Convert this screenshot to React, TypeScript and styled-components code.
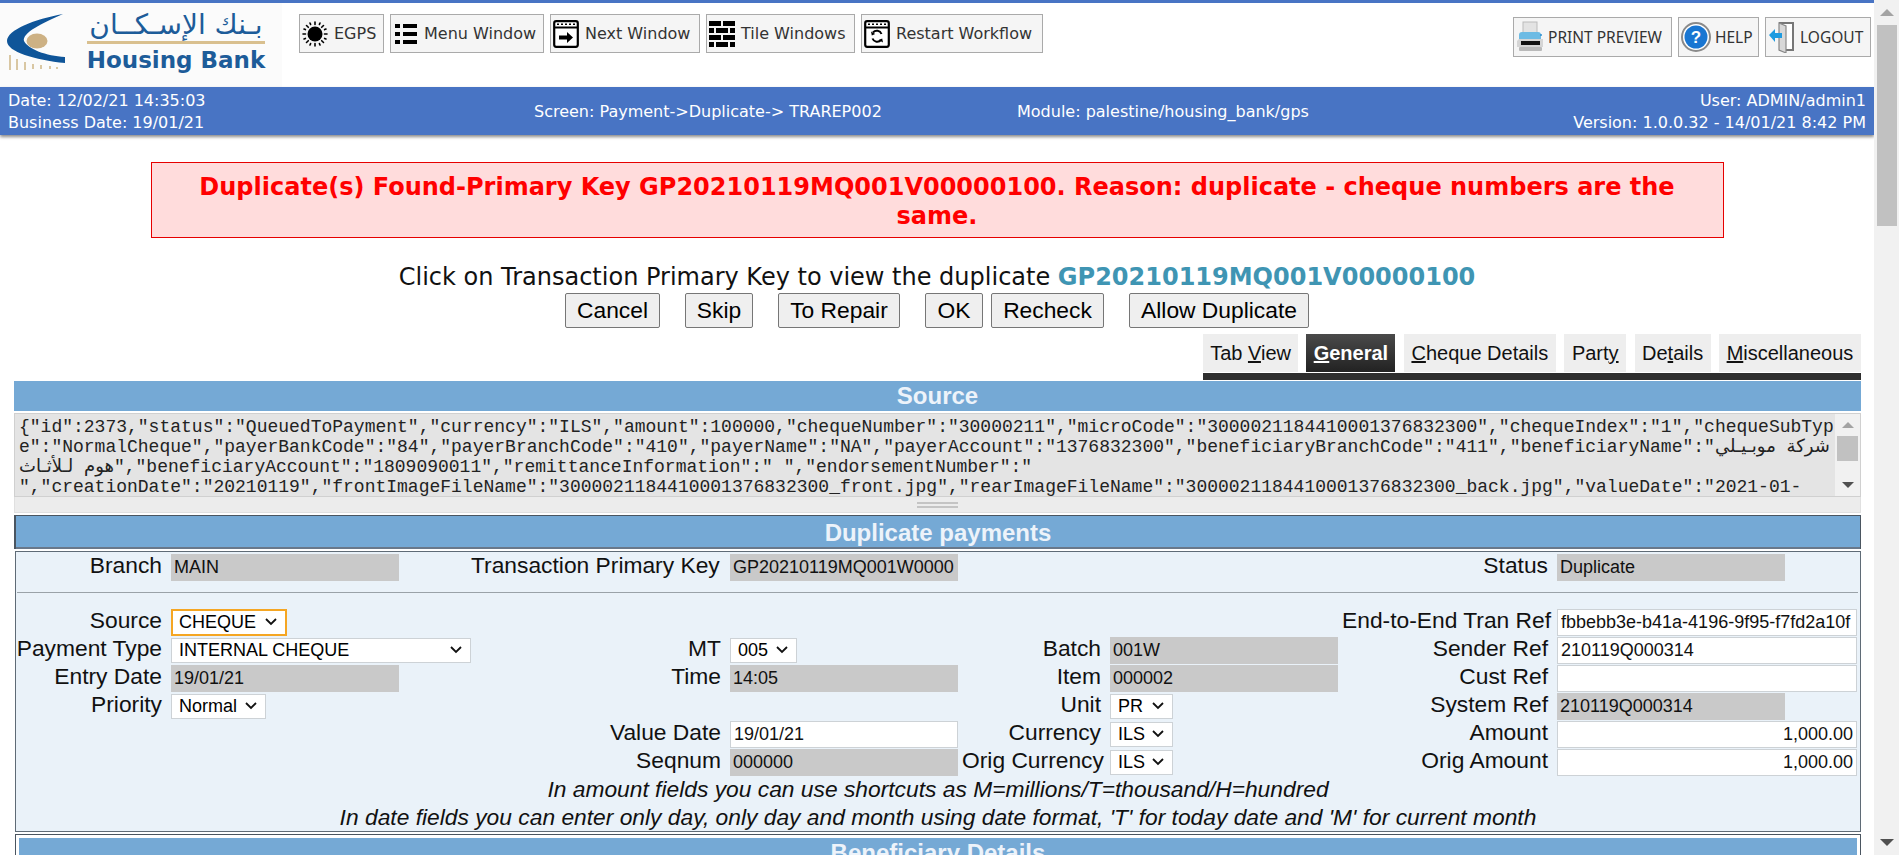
import React from "react";
import styled, { createGlobalStyle } from "styled-components";

const Global = createGlobalStyle`
  html, body { margin: 0; padding: 0; height: 855px; overflow: hidden; background: #fff; }
  * { box-sizing: border-box; }
`;

const WIDE = `"DejaVu Sans", Verdana, sans-serif`;
const HEAD = `"Noto Sans", Tahoma, sans-serif`;
const BODY = `"Liberation Sans", Arial, sans-serif`;
const CHEVRON =
  "data:image/svg+xml;utf8,<svg xmlns='http://www.w3.org/2000/svg' width='12' height='8' viewBox='0 0 12 8'><path d='M1 1l5 5 5-5' fill='none' stroke='%23111' stroke-width='1.8'/></svg>";

const Page = styled.div`
  display: flex;
  width: 1899px;
  height: 855px;
  overflow: hidden;
  font-family: ${BODY};
`;
const Main = styled.div`
  width: 1874px;
  height: 855px;
  overflow: hidden;
  flex: none;
`;

const ScrollTrack = styled.div<{ $w: number }>`
  width: ${(p) => p.$w}px;
  flex: none;
  background: #f1f1f1;
  display: flex;
  flex-direction: column;
  align-items: center;
`;
const ArrowUp = styled.div<{ $s: number; $m: number }>`
  flex: none;
  width: 0;
  height: 0;
  margin: ${(p) => p.$m}px 0;
  border-left: ${(p) => p.$s}px solid transparent;
  border-right: ${(p) => p.$s}px solid transparent;
  border-bottom: ${(p) => p.$s}px solid #a3a3a3;
`;
const ArrowDown = styled.div<{ $s: number; $m: number }>`
  flex: none;
  width: 0;
  height: 0;
  margin: auto 0 ${(p) => p.$m}px;
  border-left: ${(p) => p.$s}px solid transparent;
  border-right: ${(p) => p.$s}px solid transparent;
  border-top: ${(p) => p.$s}px solid #505050;
`;
const Thumb = styled.div<{ $h: number; $w: number }>`
  flex: none;
  width: ${(p) => p.$w}px;
  height: ${(p) => p.$h}px;
  background: #c1c1c1;
`;

const Header = styled.header`
  height: 87px;
  border-top: 3px solid #4874c4;
  display: flex;
  align-items: flex-start;
  background: #fff;
`;
const Logo = styled.div`
  width: 282px;
  height: 84px;
  flex: none;
  background: #fbfbfb;
  display: flex;
  padding: 10px 0 0 6px;
`;
const LogoText = styled.div`
  margin: -3px 0 0 17px;
  width: 182px;
  display: flex;
  flex-direction: column;
  align-items: center;
`;
const LogoArabic = styled.div`
  font-family: "DejaVu Sans", sans-serif;
  font-size: 28px;
  line-height: 30px;
  height: 30px;
  color: #1d5c99;
  white-space: nowrap;
`;
const LogoRule = styled.div`
  width: 178px;
  height: 3px;
  background: #d9c08f;
  margin-top: 1px;
`;
const LogoName = styled.div`
  font-family: ${WIDE};
  font-weight: 700;
  font-size: 23px;
  line-height: 26px;
  margin-top: 3px;
  color: #1d5c99;
  white-space: nowrap;
`;

const ToolGroup = styled.div<{ $top: number; $left: number; $right: number }>`
  display: flex;
  gap: 6px;
  margin: ${(p) => p.$top}px ${(p) => p.$right}px 0 ${(p) => p.$left}px;
`;
const Spacer = styled.div`
  flex: 1;
`;
const ToolButton = styled.button<{ $w: number }>`
  height: 39px;
  width: ${(p) => p.$w}px;
  display: flex;
  align-items: center;
  justify-content: flex-start;
  gap: 6px;
  padding: 0 0 0 2px;
  background: #f5f5f5;
  border: 1px solid #aaaaaa;
  color: #333;
  font-family: ${WIDE};
  font-size: 16px;
  white-space: nowrap;
`;
const SideButton = styled(ToolButton)`
  height: 40px;
  gap: 4px;
  font-family: ${HEAD};
  font-size: 15.5px;
`;

const Banner = styled.div`
  height: 48px;
  background: #4874c4;
  color: #fff;
  font-family: ${WIDE};
  font-size: 16px;
  line-height: 22px;
  display: grid;
  grid-template-columns: 526px 483px 1fr auto;
  align-items: center;
  padding: 2px 8px 0 8px;
  box-shadow: 0 2px 3px #8a8a8a;
  position: relative;
`;
const BannerRight = styled.div`
  text-align: right;
`;

const Message = styled.div`
  width: 1573px;
  height: 76px;
  margin: 27px auto 0;
  background: #ffdcdc;
  border: 1px solid #e60000;
  color: #ff0000;
  font-family: ${WIDE};
  font-weight: 700;
  font-size: 24px;
  line-height: 29px;
  text-align: center;
  padding: 10px 40px 0;
`;
const ClickLine = styled.div`
  margin-top: 24px;
  height: 31px;
  line-height: 31px;
  text-align: center;
  font-family: ${WIDE};
  font-size: 24px;
  color: #111;
  white-space: nowrap;
`;
const LinkKey = styled.a`
  color: #3f95b3;
  font-weight: 700;
`;
const Actions = styled.div`
  display: flex;
  justify-content: center;
  gap: 8px;
`;
const ActionButton = styled.button<{ $w: number; $far?: boolean }>`
  width: ${(p) => p.$w}px;
  height: 35px;
  margin-left: ${(p) => (p.$far ? 17 : 0)}px;
  padding: 0;
  background: #efefef;
  border: 1px solid #767676;
  border-radius: 2px;
  font-family: ${BODY};
  font-size: 22.8px;
  color: #000;
`;

const TabBar = styled.div`
  display: flex;
  gap: 8.4px;
  width: fit-content;
  margin: 6px 13px 0 auto;
  padding-bottom: 1px;
  border-bottom: 7px solid #2e2e2e;
`;
const Tab = styled.div<{ $active?: boolean; $w: number }>`
  width: ${(p) => p.$w}px;
  height: 38px;
  line-height: 38px;
  text-align: center;
  font-size: 20px;
  white-space: nowrap;
  font-weight: ${(p) => (p.$active ? 700 : 400)};
  color: ${(p) => (p.$active ? "#fff" : "#111")};
  background: ${(p) => (p.$active ? "linear-gradient(#4a4a4a, #222)" : "#eeeeee")};
`;

const SectionBar = styled.div<{ $h: number }>`
  height: ${(p) => p.$h}px;
  line-height: ${(p) => p.$h}px;
  background: #75a9d5;
  color: #edf3fa;
  text-align: center;
  font-weight: 700;
  font-size: 24px;
`;
const SourceBlock = styled.section`
  margin: 1px 13px 0 14px;
`;
const SourceArea = styled.div`
  margin-top: 2px;
  height: 84px;
  display: flex;
  background: #e4e4e4;
  border: 1px solid #d0d0d0;
`;
const SourceText = styled.pre`
  margin: 0;
  flex: 1;
  padding: 3px 0 0 4px;
  font-family: "Liberation Mono", "DejaVu Sans", monospace;
  font-size: 18px;
  line-height: 20px;
  color: #222;
  overflow: hidden;
`;
const Resize = styled.div`
  height: 16px;
  background: #ececec;
  border: 1px solid #e0e0e0;
  border-top: 0;
  display: flex;
  flex-direction: column;
  align-items: center;
  justify-content: center;
  gap: 2px;
`;
const ResizeLine = styled.div`
  width: 41px;
  height: 2px;
  background: #c4c4c4;
`;

const DupPanel = styled.section`
  margin: 2px 13px 0 14px;
  border: 1px solid #4a5560;
  border-bottom: 0;
  border-left-width: 2px;
`;
const DupTitle = styled(SectionBar)`
  border-bottom: 2px solid #69788a;
`;
const Body = styled.div`
  margin: 2px 13px 0 15px;
  height: 281px;
  background: #eaf2f9;
  border: 1px solid #5f6b76;
  padding-top: 1px;
`;
const COLS = "155px 300px 259px 232px 148px 232px 215px 1fr";
const Grid = styled.div`
  display: grid;
  grid-template-columns: ${COLS};
  grid-auto-rows: 28px;
  align-items: center;
`;
const Label = styled.label<{ $col: number; $pad?: number }>`
  grid-column: ${(p) => p.$col};
  text-align: right;
  padding-right: ${(p) => p.$pad ?? 9}px;
  margin-bottom: 3px;
  font-size: 22.8px;
  color: #111;
  white-space: nowrap;
`;
const Field = styled.input<{ $col: number; $off?: boolean; $w?: number; $right?: boolean }>`
  grid-column: ${(p) => p.$col};
  width: ${(p) => p.$w ?? 228}px;
  height: 27px;
  padding: 0 3px;
  font-family: ${BODY};
  font-size: 18px;
  color: #111;
  text-align: ${(p) => (p.$right ? "right" : "left")};
  background: ${(p) => (p.$off ? "#c9c9c9" : "#fff")};
  border: ${(p) => (p.$off ? "0" : "1px solid #cdd2d6")};
  outline: none;
`;
const Picker = styled.select<{ $col: number; $w: number; $h?: number; $focus?: boolean }>`
  grid-column: ${(p) => p.$col};
  width: ${(p) => p.$w}px;
  height: ${(p) => p.$h ?? 25}px;
  padding: 0 0 0 ${(p) => (p.$focus ? 6 : 7)}px;
  appearance: none;
  font-family: ${BODY};
  font-size: 18px;
  color: #000;
  background: #fff url("${CHEVRON}") no-repeat right 8px center;
  border: ${(p) => (p.$focus ? "2px solid #f5a623" : "1px solid #cdd2d6")};
  border-radius: 0;
  outline: none;
`;
const Rule = styled.hr`
  margin: 11px 2px 15px 1px;
  height: 1px;
  border: 0;
  background: #9aa2a8;
`;
const Note = styled.div`
  height: 28px;
  line-height: 26px;
  text-align: center;
  font-style: italic;
  font-size: 22.8px;
  color: #111;
`;
const NextPanel = styled.section`
  margin: 2px 13px 0 15px;
  border: 1px solid #4a5560;
  padding: 3px;
`;

const Sun = () => (
  <svg width="26" height="26" viewBox="0 0 26 26" stroke="#000" strokeWidth="1.6" strokeLinecap="round">
    <circle cx="13" cy="13" r="7.5" fill="#000" stroke="none" />
    <path d="M13 1v2.5M13 22.5V25M1 13h2.5M22.5 13H25M4.5 4.5l1.8 1.8M19.7 19.7l1.8 1.8M21.5 4.5l-1.8 1.8M6.3 19.7l-1.8 1.8M8 2l.6 1.4M18 2l-.6 1.4M8 24l.6-1.4M18 24l-.6-1.4M2 8l1.4.6M2 18l1.4-.6M24 8l-1.4.6M24 18l-1.4-.6" />
  </svg>
);
const MenuIcon = () => (
  <svg width="25" height="26" viewBox="-1 0 25 26" fill="#000">
    <rect x="1" y="3" width="5" height="4" />
    <rect x="9" y="3" width="14" height="4" />
    <rect x="1" y="11" width="5" height="4" />
    <rect x="9" y="11" width="14" height="4" />
    <rect x="1" y="19" width="5" height="4" />
    <rect x="9" y="19" width="14" height="4" />
  </svg>
);
const NextIcon = () => (
  <svg width="26" height="28" viewBox="0 0 26 28">
    <rect x="1.2" y="1.2" width="23.6" height="25.6" rx="2" fill="#fff" stroke="#000" strokeWidth="2.2" />
    <path d="M1 7.5h24" stroke="#000" strokeWidth="2" />
    <path d="M4 4.2h2M8 4.2h2M12 4.2h2M16 4.2h2M20 4.2h2" stroke="#000" strokeWidth="1.6" />
    <path d="M6 15.5h8v-3.5l6 5.5-6 5.5v-3.5H6z" fill="#000" />
  </svg>
);
const TileIcon = () => (
  <svg width="26" height="26" viewBox="0 0 26 26" fill="#000">
    <rect x="0" y="0" width="12" height="5" />
    <rect x="14" y="0" width="12" height="5" />
    <rect x="0" y="7" width="5" height="5" />
    <rect x="7" y="7" width="12" height="5" />
    <rect x="21" y="7" width="5" height="5" />
    <rect x="0" y="14" width="12" height="5" />
    <rect x="14" y="14" width="12" height="5" />
    <rect x="0" y="21" width="5" height="5" />
    <rect x="7" y="21" width="12" height="5" />
    <rect x="21" y="21" width="5" height="5" />
  </svg>
);
const RestartIcon = () => (
  <svg width="26" height="28" viewBox="0 0 26 28" fill="none">
    <rect x="1.2" y="1.2" width="23.6" height="25.6" rx="2" fill="#fff" stroke="#000" strokeWidth="2.2" />
    <path d="M1 7.5h24" stroke="#000" strokeWidth="2" />
    <path d="M4 4.2h2M8 4.2h2M12 4.2h2M16 4.2h2M20 4.2h2" stroke="#000" strokeWidth="1.6" />
    <path d="M17.5 14.5a5 5 0 0 0-8.5-1.5M8.5 19a5 5 0 0 0 8.5 1.5" stroke="#000" strokeWidth="2" transform="translate(0 -.5)" />
    <path d="M7 11.5l.8 4 3.4-1.6zM19 22.5l-.8-4-3.4 1.6z" fill="#000" />
  </svg>
);
const PrintIcon = () => (
  <svg width="28" height="32" viewBox="0 0 28 32">
    <rect x="7" y="1" width="14" height="12" fill="#e3e3e3" stroke="#bbb" />
    <path d="M3 14c0-2 1-3 3-3h16c2 0 3 1 3 3v4H3z" fill="#6dbbe4" />
    <path d="M3 18h24v8H1v-6z" fill="#d5d5d5" />
    <rect x="5" y="20" width="19" height="4" fill="#111" />
    <rect x="3" y="26" width="23" height="4" rx="1" fill="#b9b9b9" />
    <circle cx="25" cy="14" r="1" fill="#2f8fd0" />
  </svg>
);
const HelpIcon = () => (
  <svg width="30" height="30" viewBox="0 0 30 30">
    <circle cx="15" cy="15" r="14" fill="#fff" stroke="#8a8a8a" strokeWidth="2" />
    <circle cx="15" cy="15" r="11.5" fill="#1976d2" />
    <text x="15" y="21" textAnchor="middle" fontFamily="Liberation Sans" fontWeight="700" fontSize="17" fill="#fff">?</text>
  </svg>
);
const LogoutIcon = () => (
  <svg width="28" height="32" viewBox="0 0 28 32" fill="none">
    <path d="M11 2h14v27H11" stroke="#777" strokeWidth="2" fill="#fff" />
    <path d="M11 2l7 3v27l-7-3z" fill="#d8d8d8" stroke="#888" strokeWidth="1.2" />
    <path d="M1 14l6-6v4h7v5H7v4z" fill="#1e9be0" />
  </svg>
);
const LogoMark = () => (
  <svg width="62" height="62" viewBox="0 0 62 62" style={{ flex: "none" }}>
    <path d="M57 1C29 6 1 17 1 28c0 11 28 19 58 22v-6C40 43 22 36 18 28c-2-8 18-18 39-27z" fill="#0f5599" />
    <ellipse cx="31" cy="28" rx="10.5" ry="7.5" fill="#cdb184" />
    <path d="M4 42v15M11 46v11M19 49v8M27 51v5M35 52v4M44 53v3M51 54v2" stroke="#d9c7a3" strokeWidth="2" />
  </svg>
);

const SOURCE_LINES = [
  '{"id":2373,"status":"QueuedToPayment","currency":"ILS","amount":100000,"chequeNumber":"30000211","microCode":"3000021184410001376832300","chequeIndex":"1","chequeSubTyp',
  'e":"NormalCheque","payerBankCode":"84","payerBranchCode":"410","payerName":"NA","payerAccount":"1376832300","beneficiaryBranchCode":"411","beneficiaryName":"شركة موبـيـلي',
  'هوم لـلأثـاث","beneficiaryAccount":"1809090011","remittanceInformation":" ","endorsementNumber":"',
  '","creationDate":"20210119","frontImageFileName":"3000021184410001376832300_front.jpg","rearImageFileName":"3000021184410001376832300_back.jpg","valueDate":"2021-01-',
].join("\n");

export default function App() {
  return (
    <Page>
      <Global />
      <Main>
        <Header>
          <Logo>
            <LogoMark />
            <LogoText>
              <LogoArabic>بـنك الإسـكــان</LogoArabic>
              <LogoRule />
              <LogoName>Housing Bank</LogoName>
            </LogoText>
          </Logo>
          <ToolGroup $top={11} $left={17} $right={0}>
            <ToolButton $w={85}><Sun />EGPS</ToolButton>
            <ToolButton $w={154}><MenuIcon />Menu Window</ToolButton>
            <ToolButton $w={150}><NextIcon />Next Window</ToolButton>
            <ToolButton $w={149}><TileIcon />Tile Windows</ToolButton>
            <ToolButton $w={182}><RestartIcon />Restart Workflow</ToolButton>
          </ToolGroup>
          <Spacer />
          <ToolGroup $top={14} $left={0} $right={3}>
            <SideButton $w={159}><PrintIcon />PRINT PREVIEW</SideButton>
            <SideButton $w={81}><HelpIcon />HELP</SideButton>
            <SideButton $w={106}><LogoutIcon />LOGOUT</SideButton>
          </ToolGroup>
        </Header>
        <Banner>
          <div>Date: 12/02/21 14:35:03<br />Business Date: 19/01/21</div>
          <div>Screen: Payment-&gt;Duplicate-&gt; TRAREP002</div>
          <div>Module: palestine/housing_bank/gps</div>
          <BannerRight>User: ADMIN/admin1<br />Version: 1.0.0.32 - 14/01/21 8:42 PM</BannerRight>
        </Banner>
        <Message>Duplicate(s) Found-Primary Key GP20210119MQ001V00000100. Reason: duplicate - cheque numbers are the same.</Message>
        <ClickLine>Click on Transaction Primary Key to view the duplicate <LinkKey>GP20210119MQ001V00000100</LinkKey></ClickLine>
        <Actions>
          <ActionButton $w={95}>Cancel</ActionButton>
          <ActionButton $w={68} $far>Skip</ActionButton>
          <ActionButton $w={122} $far>To Repair</ActionButton>
          <ActionButton $w={58} $far>OK</ActionButton>
          <ActionButton $w={113}>Recheck</ActionButton>
          <ActionButton $w={180} $far>Allow Duplicate</ActionButton>
        </Actions>
        <TabBar>
          <Tab $w={95}>Tab <u>V</u>iew</Tab>
          <Tab $w={89} $active><u>G</u>eneral</Tab>
          <Tab $w={152}><u>C</u>heque Details</Tab>
          <Tab $w={62}>Part<u>y</u></Tab>
          <Tab $w={76}>De<u>t</u>ails</Tab>
          <Tab $w={142}><u>M</u>iscellaneous</Tab>
        </TabBar>
        <SourceBlock>
          <SectionBar $h={30}>Source</SectionBar>
          <SourceArea>
            <SourceText>{SOURCE_LINES}</SourceText>
            <ScrollTrack $w={25}>
              <ArrowUp $s={6} $m={8} />
              <Thumb $h={25} $w={21} />
              <ArrowDown $s={6} $m={8} />
            </ScrollTrack>
          </SourceArea>
          <Resize>
            <ResizeLine />
            <ResizeLine />
          </Resize>
        </SourceBlock>
        <DupPanel>
          <DupTitle $h={33}>Duplicate payments</DupTitle>
        </DupPanel>
        <Body>
          <Grid>
            <Label $col={1}>Branch</Label>
            <Field $col={2} $off readOnly value="MAIN" />
            <Label $col={3} $pad={19}>Transaction Primary Key</Label>
            <Field $col={4} $off readOnly value="GP20210119MQ001W0000" />
            <Label $col={7}>Status</Label>
            <Field $col={8} $off readOnly value="Duplicate" />
          </Grid>
          <Rule />
          <Grid>
            <Label $col={1}>Source</Label>
            <Picker $col={2} $w={116} $h={27} $focus defaultValue="CHEQUE"><option>CHEQUE</option></Picker>
            <Label $col={7}>End-to-End Tran Ref</Label>
            <Field $col={8} $w={300} readOnly value="fbbebb3e-b41a-4196-9f95-f7fd2a10f" />

            <Label $col={1}>Payment Type</Label>
            <Picker $col={2} $w={300} defaultValue="INTERNAL CHEQUE"><option>INTERNAL CHEQUE</option></Picker>
            <Label $col={3}>MT</Label>
            <Picker $col={4} $w={67} defaultValue="005"><option>005</option></Picker>
            <Label $col={5}>Batch</Label>
            <Field $col={6} $off readOnly value="001W" />
            <Label $col={7}>Sender Ref</Label>
            <Field $col={8} $w={300} readOnly value="210119Q000314" />

            <Label $col={1}>Entry Date</Label>
            <Field $col={2} $off readOnly value="19/01/21" />
            <Label $col={3}>Time</Label>
            <Field $col={4} $off readOnly value="14:05" />
            <Label $col={5}>Item</Label>
            <Field $col={6} $off readOnly value="000002" />
            <Label $col={7}>Cust Ref</Label>
            <Field $col={8} $w={300} readOnly value="" />

            <Label $col={1}>Priority</Label>
            <Picker $col={2} $w={95} defaultValue="Normal"><option>Normal</option></Picker>
            <Label $col={5}>Unit</Label>
            <Picker $col={6} $w={63} defaultValue="PR"><option>PR</option></Picker>
            <Label $col={7}>System Ref</Label>
            <Field $col={8} $off readOnly value="210119Q000314" />

            <Label $col={3}>Value Date</Label>
            <Field $col={4} readOnly value="19/01/21" />
            <Label $col={5}>Currency</Label>
            <Picker $col={6} $w={63} defaultValue="ILS"><option>ILS</option></Picker>
            <Label $col={7}>Amount</Label>
            <Field $col={8} $w={300} $right readOnly value="1,000.00" />

            <Label $col={3}>Seqnum</Label>
            <Field $col={4} $off readOnly value="000000" />
            <Label $col={5}>Orig Currency</Label>
            <Picker $col={6} $w={63} defaultValue="ILS"><option>ILS</option></Picker>
            <Label $col={7}>Orig Amount</Label>
            <Field $col={8} $w={300} $right readOnly value="1,000.00" />
          </Grid>
          <Note>In amount fields you can use shortcuts as M=millions/T=thousand/H=hundred</Note>
          <Note>In date fields you can enter only day, only day and month using date format, 'T' for today date and 'M' for current month</Note>
        </Body>
        <NextPanel>
          <SectionBar $h={30}>Beneficiary Details</SectionBar>
        </NextPanel>
      </Main>
      <ScrollTrack $w={25}>
        <ArrowUp $s={7} $m={9} />
        <Thumb $h={201} $w={20} />
        <ArrowDown $s={7} $m={9} />
      </ScrollTrack>
    </Page>
  );
}
